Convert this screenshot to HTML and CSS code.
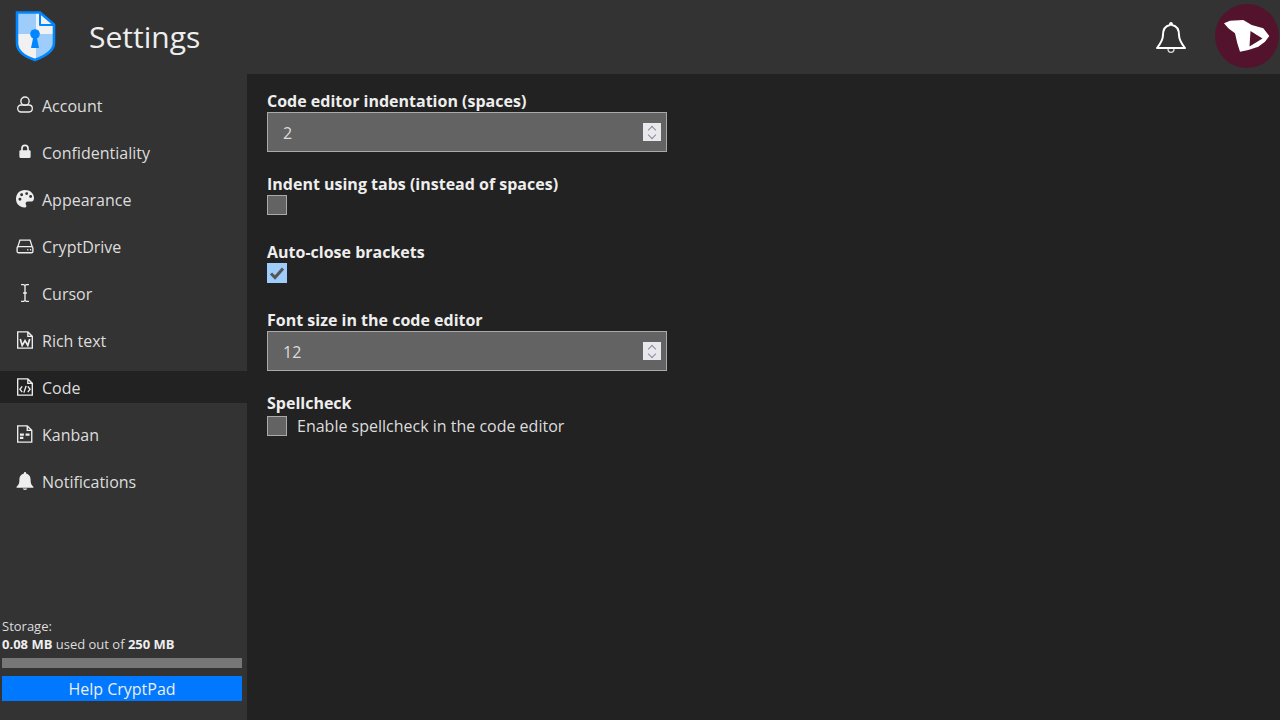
FILE: index.html
```html
<!DOCTYPE html>
<html lang="en">
<head>
<meta charset="utf-8">
<title>Settings</title>
<link rel="stylesheet" href="styles.css">
</head>
<body>
<header class="topbar">
  <svg class="logo" width="42" height="52" viewBox="0 0 42 52">
    <path d="M3 3H26L40 15V33C40 42 29 47 21 50C12 47 3 42 3 33Z" fill="#f1f1f1"/>
    <path d="M3 3H22V24H3ZM22 24H40V33C40 42 29 47 22 49.500Z" fill="#9fcdfb"/>
    <path d="M3 2.500H26L40 14.500V33C40 42 29 47 21 50C12 47 3 42 3 33Z" fill="none" stroke="#0087ff" stroke-width="2.600"/>
    <path d="M26 3V15H40Z" fill="#f1f1f1" stroke="#0087ff" stroke-width="2" stroke-linejoin="round"/>
    <circle cx="21" cy="24" r="4.800" fill="#0087ff"/>
    <path d="M19.500 26H22.500L25 38H17Z" fill="#0087ff"/>
  </svg>
  <h1 class="title">Settings</h1>
  <svg class="bell" width="32" height="34" viewBox="0 0 32 34">
    <path d="M16 3C16.800 3 17 4 17 5C22 6 24 10 24 15C24 20 26 23 30 28H2C6 23 8 20 8 15C8 10 10 6 15 5C15 4 15.200 3 16 3Z" fill="none" stroke="#fff" stroke-width="2" stroke-linejoin="round"/>
    <path d="M13 29C13 33.500 19 33.500 19 29" fill="none" stroke="#ddd" stroke-width="1.300"/>
  </svg>
  <div class="avatar">
    <svg width="64" height="64" viewBox="0 0 64 64">
      <path d="M9 19.300L15 16.700L28.300 16L36.700 21L48.300 24.300L54.300 32L50 37.700L43.300 42.700L33.300 46L25 47.700L22.300 39.300L20 29.300L13.300 24.300ZM35.500 27L34.500 42.500L47.500 34.500Z" fill="#fff" fill-rule="evenodd"/>
    </svg>
  </div>
</header>
<div class="main">
  <nav class="sidebar">
    <ul class="menu">
      <li class="item">
        <svg class="ico" viewBox="0 0 16 16"><circle cx="8" cy="4.600" r="3.700" class="ln"/><rect x="1.500" y="8" width="13" height="6.200" rx="3" class="ln"/></svg>
        <span>Account</span>
      </li>
      <li class="item">
        <svg class="ico" viewBox="0 0 16 16"><path d="M5.300 7V4.800A2.700 2.700 0 0 1 10.700 4.800V7" class="ln thick"/><rect x="3" y="6.500" width="10" height="6.800" rx="1" class="fl"/></svg>
        <span>Confidentiality</span>
      </li>
      <li class="item">
        <svg class="ico" viewBox="0 0 16 16"><path fill-rule="evenodd" class="fl" d="M8 0C3 0 0 3.500 0 8C0 12.500 3.500 15.500 7.500 15.500C9.500 15.500 9.500 14 8.800 13C8 11.500 9 10.300 10.500 10.300H13C15 10.300 16 9 16 7C16 3 12.500 0 8 0ZM3.500 9.500A1.300 1.300 0 1 0 3.500 6.900A1.300 1.300 0 1 0 3.500 9.500ZM5 5.500A1.300 1.300 0 1 0 5 2.900A1.300 1.300 0 1 0 5 5.500ZM9.500 4.500A1.300 1.300 0 1 0 9.500 1.900A1.300 1.300 0 1 0 9.500 4.500ZM13 7A1.300 1.300 0 1 0 13 4.400A1.300 1.300 0 1 0 13 7Z"/></svg>
        <span>Appearance</span>
      </li>
      <li class="item">
        <svg class="ico" viewBox="0 0 16 16"><path d="M1.500 9L3.500 2.800H12.500L14.500 9" class="ln"/><rect x="1" y="8.500" width="14" height="5.500" rx="1.200" class="ln"/><path d="M10 11.300H11M12.500 11.300H13.500" class="ln"/></svg>
        <span>CryptDrive</span>
      </li>
      <li class="item">
        <svg class="ico" viewBox="0 0 16 16"><path d="M4.500 .5H6.800L8 1.500L9.200 .5H11.500M8 1.500V14.500M4.500 15.500H6.800L8 14.500L9.200 15.500H11.500M6.300 8H9.700" class="ln"/></svg>
        <span>Cursor</span>
      </li>
      <li class="item">
        <svg class="ico" viewBox="0 0 16 16"><path d="M1.500 .8H10.500L14.500 4.800V15.200H1.500ZM10.500 .8V4.800H14.500" class="ln"/><path d="M3.800 7.200L5.500 12.800L8 8.500L10.500 12.800L12.200 7.200" class="ln thick"/></svg>
        <span>Rich text</span>
      </li>
      <li class="item active">
        <svg class="ico" viewBox="0 0 16 16"><path d="M1.500 .8H10.500L14.500 4.800V15.200H1.500ZM10.500 .8V4.800H14.500" class="ln"/><path d="M5.500 7.500L3.500 10L5.500 12.500M10.500 7.500L12.500 10L10.500 12.500M9 7L7 13" class="ln"/></svg>
        <span>Code</span>
      </li>
      <li class="item">
        <svg class="ico" viewBox="0 0 16 16"><path d="M1.500 .8H10L14 4.800V15.200H1.500ZM10 .8V4.800H14" class="ln"/><path d="M3.500 7.500H7V9.500H3.500ZM8.500 7.500H12V9.500H8.500ZM3.500 10.500H6.500V12.500H3.500Z" class="fl"/></svg>
        <span>Kanban</span>
      </li>
      <li class="item">
        <svg class="ico" viewBox="0 0 16 16"><path class="fl" d="M8 0C8.800 0 9 .6 9 1.300C12 2 13 4.500 13 7C13 10.500 14 11.500 15.500 13V14H.5V13C2 11.500 3 10.500 3 7C3 4.500 4 2 7 1.300C7 .6 7.200 0 8 0ZM6 14.700H10C10 16.300 6 16.300 6 14.700Z"/></svg>
        <span>Notifications</span>
      </li>
    </ul>
    <div class="storage">
      <div class="storage-text">Storage:<br><b>0.08 MB</b> used out of <b>250 MB</b></div>
      <div class="meter"></div>
      <div class="help">Help CryptPad</div>
    </div>
  </nav>
  <main class="content">
    <section class="field">
      <label class="lbl">Code editor indentation (spaces)</label>
      <div class="numinput"><span class="val">2</span><span class="spin"><i class="up"></i><i class="down"></i></span></div>
    </section>
    <section class="field tight">
      <label class="lbl">Indent using tabs (instead of spaces)</label>
      <div class="checkrow"><span class="check"></span></div>
    </section>
    <section class="field tight">
      <label class="lbl">Auto-close brackets</label>
      <div class="checkrow">
        <span class="check on"><svg width="20" height="20" viewBox="0 0 20 20"><path d="M4 10.500L8 14.500L16 5.500" fill="none" stroke="#555" stroke-width="3"/></svg></span>
      </div>
    </section>
    <section class="field">
      <label class="lbl">Font size in the code editor</label>
      <div class="numinput"><span class="val">12</span><span class="spin"><i class="up"></i><i class="down"></i></span></div>
    </section>
    <section class="field last">
      <label class="lbl spaced">Spellcheck</label>
      <div class="checkrow"><span class="check"></span><span class="checktext">Enable spellcheck in the code editor</span></div>
    </section>
  </main>
</div>
</body>
</html>
```

FILE: styles.css
```css
* { box-sizing: border-box; }
html, body { height: 100%; }
body {
  margin: 0;
  height: 720px;
  overflow: hidden;
  background: #222;
  color: #eee;
  font-family: "Open Sans", sans-serif;
  font-size: 16px;
  display: flex;
  flex-direction: column;
}
.topbar {
  height: 74px;
  flex: none;
  background: #333;
  display: flex;
  align-items: center;
  padding-left: 14px;
  padding-right: 1px;
}
.logo { flex: none; margin-top: -2px; }
.title {
  margin: 0 0 0 33px;
  font-size: 30px;
  font-weight: 400;
  color: #eee;
  line-height: 40px;
}
.bell { margin-left: auto; margin-right: 28px; }
.avatar {
  width: 64px;
  height: 64px;
  border-radius: 50%;
  background: #53132c;
  margin-top: -2px;
}
.avatar svg { display: block; }
.main { flex: 1; display: flex; min-height: 0; }
.sidebar {
  width: 247px;
  flex: none;
  background: #333;
  display: flex;
  flex-direction: column;
  padding-top: 15px;
}
.menu { list-style: none; margin: 0; padding: 0; display: flex; flex-direction: column; gap: 15px; }
.item {
  height: 32px;
  display: flex;
  align-items: center;
  padding-left: 16px;
  padding-top: 2px;
  gap: 8px;
  color: #ddd;
}
.item.active { background: #222; }
.ico { width: 18px; height: 18px; flex: none; margin-top: -2px; }
.ln { fill: none; stroke: #eee; stroke-width: 1.200; }
.ln.thick { stroke-width: 1.500; }
.fl { fill: #eee; }
.storage { margin-top: auto; padding: 0 5px 19px 2px; }
.storage-text { font-size: 13px; line-height: 18px; color: #ddd; }
.storage-text b { font-weight: 700; color: #eee; }
.meter { height: 10px; background: #777; margin-top: 5px; }
.help {
  height: 25px;
  margin-top: 8px;
  background: #0078ff;
  color: #eee;
  text-align: center;
  line-height: 27px;
}
.content { flex: 1; padding: 16px 20px; }
.field { margin-bottom: 21px; }
.field.tight { margin-bottom: 26px; }
.field.last { margin-bottom: 0; }
.lbl { display: block; font-weight: 700; line-height: 22px; color: #eee; }
.lbl.spaced { margin-bottom: 2px; }
.numinput {
  width: 400px;
  height: 40px;
  background: #636363;
  border: 1px solid #aaa;
  padding-left: 15px;
  display: flex;
  align-items: center;
  justify-content: space-between;
  color: #ddd;
}
.val { margin-top: 2px; }
.spin {
  width: 18px;
  height: 18px;
  margin-right: 5px;
  background: #e9e9ed;
  display: flex;
  flex-direction: column;
  align-items: center;
  justify-content: center;
  gap: 4px;
}
.spin i { display: block; width: 6px; height: 6px; border-left: 1.500px solid #8a8a9a; border-top: 1.500px solid #8a8a9a; }
.spin .up { transform: rotate(45deg); margin-bottom: -2px; }
.spin .down { transform: rotate(225deg); margin-top: -3px; }
.checkrow { display: flex; align-items: center; height: 20px; }
.check {
  width: 20px;
  height: 20px;
  flex: none;
  background: #636363;
  border: 1px solid #aaa;
}
.check.on { background: #9fcdfb; border: 0; }
.check svg { display: block; }
.checktext { margin-left: 10px; color: #ddd; }
```
